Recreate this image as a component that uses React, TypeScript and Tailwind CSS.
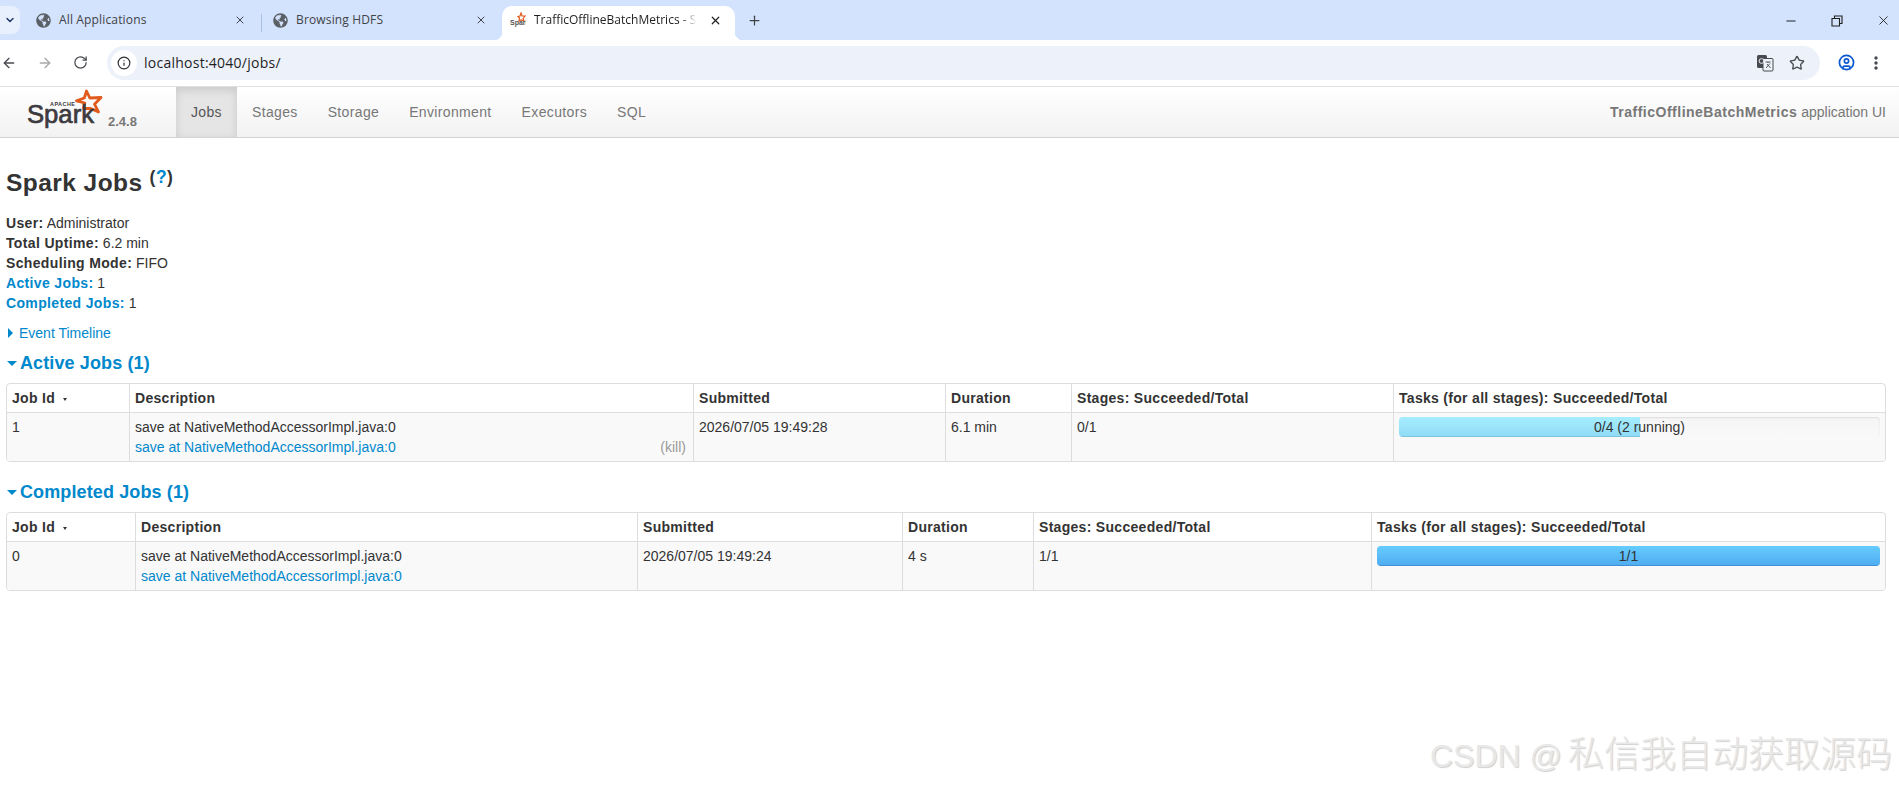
import { ArrowLeft, ArrowRight, ChevronDown, CircleUser, Info, Minus, Plus, RotateCw, Star, X } from 'lucide-react'
import { FaGlobeAmericas } from 'react-icons/fa'

const navItems = ['Jobs', 'Stages', 'Storage', 'Environment', 'Executors', 'SQL']

function SparkLogo() {
  return (
    <svg width="80" height="46" viewBox="0 0 80 46" className="shrink-0">
      <path d="M59.5 2 L62.8 9 L74 8.5 L67.5 15.2 L71.5 23 L63.5 19.5 L56.5 19.5 L57.8 14 L49.5 11.8 L57.3 9 Z" fill="none" stroke="#e25a1c" strokeWidth="2.8" strokeLinejoin="round" />
      <text x="23" y="16.7" fontSize="5.5" fontWeight="700" fill="#3c3a3e" fontFamily="Liberation Sans, sans-serif" textLength="25">APACHE</text>
      <text x="0" y="34.3" fontSize="26" stroke="#3c3a3e" strokeWidth="0.7" fill="#3c3a3e" fontFamily="Liberation Sans, sans-serif" textLength="67" lengthAdjust="spacingAndGlyphs">Spark</text>
    </svg>
  )
}

function MiniSpark() {
  return (
    <svg width="16" height="16" viewBox="0 0 16 16" className="shrink-0">
      <path d="M11 1 L12 4 L15 4 L13 6.5 L14 9 L11 8 L9 9 L9.5 6 L8 4.5 L10 4 Z" fill="none" stroke="#e25a1c" strokeWidth="1.2" />
      <text x="0" y="13" fontSize="7" fontWeight="700" fill="#555" fontFamily="Liberation Sans, sans-serif">Spark</text>
    </svg>
  )
}

function TranslateIcon() {
  return (
    <svg width="18" height="18" viewBox="0 0 18 18" className="shrink-0">
      <rect x="1" y="1" width="10" height="13" rx="1.5" fill="#474a4f" />
      <rect x="7" y="4.5" width="10" height="12.5" rx="1" fill="#eef1f7" stroke="#474a4f" strokeWidth="1" />
      <circle cx="5.5" cy="7" r="2.4" fill="none" stroke="#e8eaed" strokeWidth="1" />
      <path d="M9.5 8h5M12 8v1M10 14l4-4.5M11 10l3.5 4" stroke="#474a4f" strokeWidth="0.9" fill="none" />
    </svg>
  )
}

function BrowserTab({ title, className }: { title: string; className: string }) {
  return (
    <div className={`flex h-[34px] items-center pb-[6px] ${className}`}>
      <FaGlobeAmericas size={15} className="ml-[9px] shrink-0 text-[#5b5f66]" />
      <span className="ml-[8px] flex-1 text-[12px] tracking-[0.15px] text-[#3f4247]">{title}</span>
      <X size={12} strokeWidth={2} className="mr-[15px] text-[#3f4247]" />
    </div>
  )
}

function BrowserChrome() {
  return (
    <div className="font-['Open_Sans',sans-serif]">
      <div className="flex h-10 items-end bg-[#d3e3fd]">
        <div className="mb-[6px] flex h-[28px] w-[20px] items-center justify-center rounded-r-[8px] bg-[#e8f0fe]">
          <ChevronDown size={12} strokeWidth={3} className="text-[#1f3a66]" />
        </div>
        <BrowserTab title="All Applications" className="w-[241px] pl-[7px]" />
        <div className="mb-[8px] h-[18px] w-px bg-[#a9c1e6]" />
        <BrowserTab title="Browsing HDFS" className="w-[240px] pl-[2px]" />
        <div className="relative flex h-[34px] w-[233px] items-center rounded-t-[10px] bg-white pb-[6px]">
          <span className="absolute bottom-0 left-[-8px] h-[8px] w-[8px] bg-[radial-gradient(circle_at_0_0,transparent_8px,white_8.5px)]" />
          <span className="absolute bottom-0 right-[-8px] h-[8px] w-[8px] bg-[radial-gradient(circle_at_100%_0,transparent_8px,white_8.5px)]" />
          <div className="ml-[8px]"><MiniSpark /></div>
          <span className="ml-[8px] w-[163px] overflow-hidden whitespace-nowrap text-[12px] text-[#1f1f1f] [mask-image:linear-gradient(to_right,black_90%,transparent)]">TrafficOfflineBatchMetrics - Spark Jobs</span>
          <X size={13} strokeWidth={2.2} className="ml-[12px] text-[#1f1f1f]" />
        </div>
        <Plus size={15} strokeWidth={2} className="mb-[12px] ml-[12px] text-[#3f4247]" />
        <div className="mb-[12px] ml-auto flex w-[115px] items-center justify-between pr-[8px]">
          <Minus size={14} strokeWidth={2.4} className="text-[#5c6370]" />
          <svg width="12" height="12" viewBox="0 0 12 12">
            <path d="M1 3.5h7.5V11H1zM3.5 3.5V1H11v7.5H8.5" fill="none" stroke="#1f1f1f" strokeWidth="1.1" />
          </svg>
          <X size={15} strokeWidth={1.4} className="text-[#1f1f1f]" />
        </div>
      </div>
      <div className="flex h-[47px] items-center border-b border-[#e0e0e0] bg-white pb-[1px]">
        <ArrowLeft size={16} strokeWidth={2} className="ml-[1px] text-[#474a4f]" />
        <ArrowRight size={16} strokeWidth={2} className="ml-[20px] text-[#a6a8ab]" />
        <RotateCw size={15} strokeWidth={2} className="ml-[20px] text-[#474a4f]" />
        <div className="ml-[19px] flex h-[34px] w-[1713px] items-center rounded-full bg-[#edf2fa]">
          <div className="ml-[4px] flex h-[26px] w-[26px] items-center justify-center rounded-full bg-white">
            <Info size={14} strokeWidth={2} className="text-[#2b2d30]" />
          </div>
          <span className="ml-[7px] text-[14px] tracking-[0.25px] text-[#1f1f1f]">localhost:4040/jobs/</span>
          <div className="ml-auto flex items-center gap-[15px] pr-[15px]">
            <TranslateIcon />
            <Star size={16} strokeWidth={2} className="text-[#474a4f]" />
          </div>
        </div>
        <CircleUser size={17} strokeWidth={2.4} className="ml-[18px] text-[#0b57d0]" />
        <svg width="4" height="14" viewBox="0 0 4 14" className="ml-[19px]">
          <circle cx="2" cy="2" r="1.7" fill="#474a4f" />
          <circle cx="2" cy="7" r="1.7" fill="#474a4f" />
          <circle cx="2" cy="12" r="1.7" fill="#474a4f" />
        </svg>
      </div>
    </div>
  )
}

function Navbar() {
  return (
    <div className="flex h-[51px] items-stretch border-b border-[#d4d4d4] bg-gradient-to-b from-white to-[#f2f2f2] text-[#777]">
      <div className="ml-[27px] flex w-[149px] items-center">
        <SparkLogo />
        <span className="ml-px mt-[19px] text-[13px] font-bold leading-none">2.4.8</span>
      </div>
      {navItems.map((item, i) => (
        <div
          key={item}
          className={i === 0 ? 'flex items-center bg-[#e5e5e5] px-[15px] tracking-[0.35px] text-[#555] shadow-[inset_0_3px_8px_rgba(0,0,0,0.125)]' : 'flex items-center px-[15px] tracking-[0.35px]'}
        >
          {item}
        </div>
      ))}
      <div className="ml-auto flex items-center pr-[13px]">
        <strong className="tracking-[0.5px]">TrafficOfflineBatchMetrics</strong>&nbsp;application UI
      </div>
    </div>
  )
}

function SectionTitle({ children }: { children: string }) {
  return (
    <h4 className="flex h-5 items-center text-[18px] font-bold leading-5 tracking-[0.12px] text-[#0088cc]">
      <span className="ml-px mr-[3px] h-0 w-0 border-x-[5px] border-t-[5px] border-x-transparent border-t-[#0088cc]" />
      {children}
    </h4>
  )
}

type JobRow = {
  id: string
  submitted: string
  duration: string
  stages: string
  tasks: string
  kill?: boolean
  running?: boolean
}

function ProgressBar({ row }: { row: JobRow }) {
  return (
    <div className="relative h-5 overflow-hidden rounded-[4px] bg-gradient-to-b from-[#f5f5f5] to-[#f9f9f9] text-center leading-5 shadow-[inset_0_1px_2px_rgba(0,0,0,0.1)]">
      {row.running ? (
        <div className="absolute inset-y-0 left-0 w-1/2 border-b border-[#7cc4dc] bg-gradient-to-b from-[#a6edff] to-[#90dcf6]" />
      ) : (
        <div className="absolute inset-0 border-b border-[#3f8fd6] bg-gradient-to-b from-[#66ccff] to-[#50adf0]" />
      )}
      <span className="relative">{row.tasks}</span>
    </div>
  )
}

function JobsTable({ row, cols }: { row: JobRow; cols: string[] }) {
  const headers = ['Description', 'Submitted', 'Duration', 'Stages: Succeeded/Total', 'Tasks (for all stages): Succeeded/Total']
  return (
    <div className="mr-[13px] overflow-hidden rounded-[4px] border border-[#ddd]">
      <table className="w-full table-fixed border-separate border-spacing-0">
        <colgroup>
          {cols.map((c, i) => (
            <col key={i} className={c} />
          ))}
        </colgroup>
        <thead>
          <tr>
            <th className="px-[5px] py-[4px] text-left font-bold tracking-[0.3px]">
              Job Id
              <span className="ml-[8px] inline-block h-0 w-0 border-x-[2.5px] border-t-[3px] border-x-transparent border-t-[#333] align-[2px]" />
            </th>
            {headers.map((h) => (
              <th key={h} className="border-l border-[#ddd] px-[5px] py-[4px] text-left font-bold tracking-[0.3px]">
                {h}
              </th>
            ))}
          </tr>
        </thead>
        <tbody>
          <tr className="bg-[#f9f9f9] align-top">
            <td className="border-t border-[#ddd] px-[5px] py-[4px]">{row.id}</td>
            <td className="border-l border-t border-[#ddd] px-[5px] py-[4px]">
              {row.kill && <span className="float-right mr-[2px] mt-5 text-[#999]">(kill)</span>}
              <div>save at NativeMethodAccessorImpl.java:0</div>
              <div className="text-[#0088cc]">save at NativeMethodAccessorImpl.java:0</div>
            </td>
            <td className="border-l border-t border-[#ddd] px-[5px] py-[4px]">{row.submitted}</td>
            <td className="border-l border-t border-[#ddd] px-[5px] py-[4px]">{row.duration}</td>
            <td className="border-l border-t border-[#ddd] px-[5px] py-[4px]">{row.stages}</td>
            <td className="border-l border-t border-[#ddd] px-[5px] py-[4px]">
              <ProgressBar row={row} />
            </td>
          </tr>
        </tbody>
      </table>
    </div>
  )
}

export default function App() {
  return (
    <div className="relative h-[787px] w-full overflow-hidden bg-white font-['Liberation_Sans',sans-serif] text-[14px] leading-5 text-[#333]">
      <BrowserChrome />
      <Navbar />
      <div className="pl-[6px]">
        <h3 className="mt-[25px] flex h-10 items-center text-[24.5px] font-bold leading-10 tracking-[0.45px]">
          Spark Jobs
          <span className="mb-[11px] ml-[7px] text-[17.5px] leading-none">
            (<span className="text-[#0088cc]">?</span>)
          </span>
        </h3>
        <ul className="mt-[10px]">
          <li><strong className="tracking-[0.35px]">User:</strong> Administrator</li>
          <li><strong className="tracking-[0.35px]">Total Uptime:</strong> 6.2 min</li>
          <li><strong className="tracking-[0.35px]">Scheduling Mode:</strong> FIFO</li>
          <li><strong className="tracking-[0.35px] text-[#0088cc]">Active Jobs:</strong> 1</li>
          <li><strong className="tracking-[0.35px] text-[#0088cc]">Completed Jobs:</strong> 1</li>
        </ul>
        <div className="mt-[10px] flex h-5 items-center text-[#0088cc]">
          <span className="ml-[2px] mr-[6px] h-0 w-0 border-y-[5px] border-l-[5px] border-y-transparent border-l-[#0088cc]" />
          Event Timeline
        </div>
        <div className="mt-[10px]">
          <SectionTitle>Active Jobs (1)</SectionTitle>
        </div>
        <div className="mt-[10px]">
          <JobsTable
            row={{ id: '1', submitted: '2026/07/05 19:49:28', duration: '6.1 min', stages: '0/1', tasks: '0/4 (2 running)', kill: true, running: true }}
            cols={['w-[122px]', 'w-[564px]', 'w-[252px]', 'w-[126px]', 'w-[322px]', 'w-auto']}
          />
        </div>
        <div className="mt-[20px]">
          <SectionTitle>Completed Jobs (1)</SectionTitle>
        </div>
        <div className="mt-[10px]">
          <JobsTable
            row={{ id: '0', submitted: '2026/07/05 19:49:24', duration: '4 s', stages: '1/1', tasks: '1/1' }}
            cols={['w-[128px]', 'w-[502px]', 'w-[265px]', 'w-[131px]', 'w-[338px]', 'w-auto']}
          />
        </div>
      </div>
      <div className="absolute left-[1430px] top-[734px] whitespace-nowrap font-['Liberation_Sans','Noto_Sans_CJK_SC',sans-serif] text-[36px] font-light leading-[42px] text-[#e8e8e8] [text-shadow:1px_1px_1px_#d0d0d0]">
        <span className="mr-[6px] text-[32px]">CSDN @</span>私信我自动获取源码
      </div>
    </div>
  )
}
